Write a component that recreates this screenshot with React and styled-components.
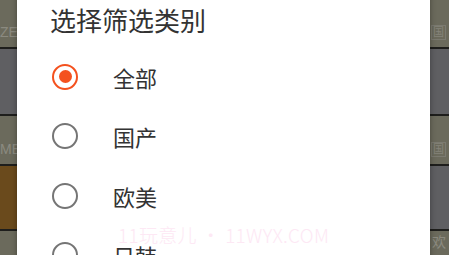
import styled, { createGlobalStyle } from 'styled-components'

const GlobalStyle = createGlobalStyle`
  html, body {
    margin: 0;
    padding: 0;
    width: 449px;
    height: 255px;
    overflow: hidden;
    background: #222;
    font-family: "Noto Sans CJK SC", "Noto Sans", sans-serif;
  }
`

const Screen = styled.div`
  position: relative;
  width: 449px;
  height: 255px;
  overflow: hidden;
`

const Backdrop = styled.div`
  display: grid;
  grid-template-columns: 1fr 1fr;
  width: 100%;
`

const Column = styled.div`
  display: flex;
  flex-direction: column;
`

const Cell = styled.div`
  height: ${p => p.h}px;
  background: ${p => p.bg};
  border-bottom: 2px solid #1e1e1c;
  display: flex;
  align-items: ${p => p.align || 'flex-end'};
  justify-content: ${p => (p.right ? 'flex-end' : 'flex-start')};
  padding: ${p => (p.align ? '0 3px 0 0' : '0 3px 7px 0')};
  box-sizing: border-box;
  color: #8b8a80;
  font-family: "Liberation Sans", "Noto Sans CJK SC", sans-serif;
  font-size: 14px;
  overflow: hidden;
`

const Tag = styled.span`
  border: 1px solid #7b7a70;
  padding: 0 1px;
  font-size: 11px;
  line-height: 13px;
  color: #85847a;
`

const Dialog = styled.div`
  position: absolute;
  left: 17px;
  top: -14px;
  width: 413px;
  height: 300px;
  background: #fff;
  box-shadow: 0 0 6px rgba(0, 0, 0, 0.35);
  display: flex;
  flex-direction: column;
  padding: 17px 0 0 0;
  box-sizing: border-box;
`

const Title = styled.div`
  font-size: 26px;
  line-height: 34px;
  color: #333;
  padding-left: 33px;
  margin-bottom: 10px;
`

const Option = styled.div`
  display: flex;
  align-items: center;
  height: 59.5px;
  padding-left: 35px;
  gap: 35px;
`

const Radio = styled.span`
  width: 26px;
  height: 26px;
  border-radius: 50%;
  border: 2.5px solid ${p => (p.checked ? '#f4511e' : '#757575')};
  box-sizing: border-box;
  display: flex;
  align-items: center;
  justify-content: center;

  &::after {
    content: '';
    width: 13px;
    height: 13px;
    border-radius: 50%;
    background: #f4511e;
    display: ${p => (p.checked ? 'block' : 'none')};
  }
`

const Label = styled.span`
  font-size: 22px;
  color: #333;
`

const Watermark = styled.div`
  position: absolute;
  left: 118px;
  top: 221px;
  font-size: 19px;
  font-weight: 300;
  letter-spacing: 0.3px;
  color: #fde8f4;
  white-space: nowrap;
  pointer-events: none;
`

const leftCells = [
  { h: 49, bg: '#6b6a5c', text: 'ZE' },
  { h: 67, bg: '#5f5f62' },
  { h: 50, bg: '#6b6a5c', text: 'ME' },
  { h: 65, bg: '#6a4a1c' },
  { h: 40, bg: '#6b6a5c' },
]

const rightCells = [
  { h: 49, bg: '#6b6a5c', tag: '国' },
  { h: 67, bg: '#5f5f62' },
  { h: 50, bg: '#6b6a5c', tag: '国' },
  { h: 65, bg: '#5f5f62' },
  { h: 40, bg: '#6b6a5c', text: '欢', align: 'flex-start' },
]

const options = ['全部', '国产', '欧美', '日韩']

export default function App() {
  return (
    <>
      <GlobalStyle />
      <Screen>
        <Backdrop>
          <Column>
            {leftCells.map((c, i) => (
              <Cell key={i} h={c.h} bg={c.bg} align={c.align}>
                {c.text}
              </Cell>
            ))}
          </Column>
          <Column>
            {rightCells.map((c, i) => (
              <Cell key={i} h={c.h} bg={c.bg} align={c.align} right>
                {c.tag ? <Tag>{c.tag}</Tag> : c.text}
              </Cell>
            ))}
          </Column>
        </Backdrop>
        <Dialog>
          <Title>选择筛选类别</Title>
          {options.map((o, i) => (
            <Option key={o}>
              <Radio checked={i === 0} />
              <Label>{o}</Label>
            </Option>
          ))}
        </Dialog>
        <Watermark>11玩意儿 • 11WYX.COM</Watermark>
      </Screen>
    </>
  )
}
